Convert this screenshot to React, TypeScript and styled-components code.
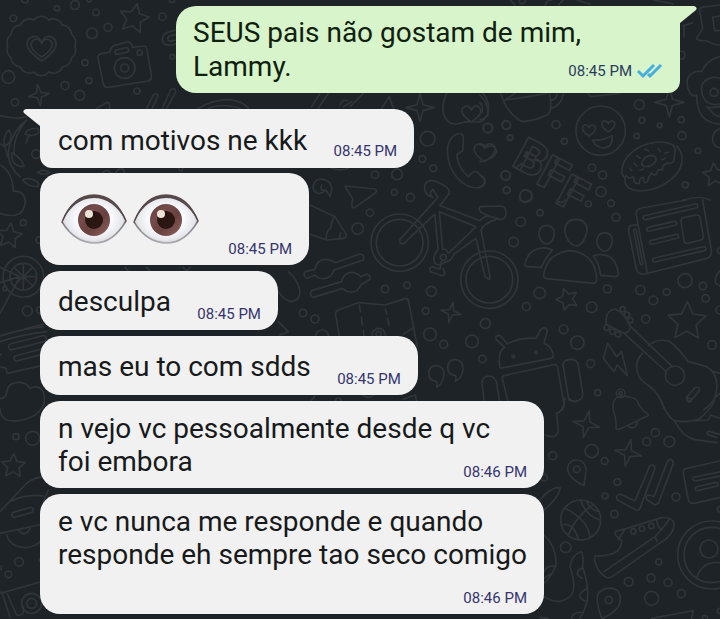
import React from "react";
import styled, { createGlobalStyle, css } from "styled-components";

const GlobalStyle = createGlobalStyle`
  *, *::before, *::after { box-sizing: border-box; }
  body {
    margin: 0;
    background: #1e2327;
    font-family: Roboto, "Liberation Sans", sans-serif;
  }
`;

const Chat = styled.main`
  position: relative;
  min-height: 100vh;
  overflow: hidden;
  background: #1e2327;
`;

const Wallpaper = styled.svg`
  position: absolute;
  inset: 0;
  width: 100%;
  height: 100%;
  fill: none;
  stroke: #303539;
  stroke-width: 5;
  stroke-linejoin: round;
  stroke-linecap: round;
`;

const WallpaperLetter = styled.text`
  font-family: Roboto, sans-serif;
  font-size: 140px;
  font-weight: 900;
`;

const Messages = styled.ol`
  position: relative;
  display: flex;
  flex-direction: column;
  align-items: flex-start;
  gap: 6px;
  margin: 0;
  padding: 6px 40px 4px;
  list-style: none;
`;

const Bubble = styled.li<{ $sent?: boolean; $first?: boolean }>`
  position: relative;
  display: grid;
  align-items: center;
  max-width: 504px;
  min-height: 59px;
  padding: 11px 17px 10px 18px;
  border-radius: 20px;
  background: #f1f1f1;
  color: #17191b;
  ${(p) =>
    p.$first &&
    css`
      margin-bottom: -1px;
      padding: 15px 17px 11px 18px;
      border-radius: 0 20px 20px 12px;
    `}
  ${(p) =>
    p.$sent &&
    css`
      align-self: flex-end;
      margin-bottom: 10px;
      padding: 10px 17px 9px;
      border-radius: 20px 0 12px 20px;
      background: #d7f4cb;
      color: #10200f;
    `}
`;

const Text = styled.p<{ $sent?: boolean }>`
  grid-area: 1 / 1;
  margin: 0;
  font-size: 28px;
  line-height: ${(p) => (p.$sent ? 34 : 33)}px;
`;

const MetaSpace = styled.span<{ $sent?: boolean }>`
  display: inline-block;
  width: ${(p) => (p.$sent ? 120 : 90)}px;
  height: 1px;
`;

const Meta = styled.span<{ $sent?: boolean }>`
  grid-area: 1 / 1;
  align-self: end;
  justify-self: end;
  display: flex;
  align-items: center;
  gap: 5px;
  margin-bottom: ${(p) => (p.$sent ? 3 : -4)}px;
  color: ${(p) => (p.$sent ? "#2b3b5e" : "#35346e")};
  font-size: 15px;
  line-height: 20px;
`;

const Tail = styled.svg<{ $sent?: boolean }>`
  position: absolute;
  top: 0;
  width: 18px;
  height: 18px;
  fill: ${(p) => (p.$sent ? "#d7f4cb" : "#f1f1f1")};
  ${(p) => (p.$sent ? "left: 100%; margin-left: -1px; transform: scaleX(-1);" : "right: 100%; margin-right: -1px;")}
`;

const Ticks = styled.svg`
  width: 26px;
  height: 16px;
  fill: none;
  stroke: #46aede;
  stroke-width: 3;
`;

const Eyes = styled.span`
  grid-area: 1 / 1;
  display: flex;
  gap: 6px;
  padding: 10px 93px 11px 3px;
`;

const EyeDrawing = styled.svg`
  display: block;
  width: 66px;
  height: 50px;
`;

type Circle = [number, number, number];

const star = (x: number, y: number, r: number, turn = 0, points = 5, depth = 0.48) => {
  const corners = Array.from({ length: points * 2 }, (_, i) => {
    const a = (turn * Math.PI) / 180 - Math.PI / 2 + (i * Math.PI) / points;
    const d = i % 2 ? r * depth : r;
    return `${(x + Math.cos(a) * d).toFixed(1)} ${(y + Math.sin(a) * d).toFixed(1)}`;
  });
  return `M${corners.join("L")}Z`;
};

const sparkle = (x: number, y: number, r: number, turn = 0) => star(x, y, r, turn, 4, 0.3);

const pill = (x1: number, y1: number, x2: number, y2: number, w = 6) => {
  const len = Math.hypot(x2 - x1, y2 - y1);
  const nx = (-(y2 - y1) / len) * w;
  const ny = ((x2 - x1) / len) * w;
  return `M${x1 + nx} ${y1 + ny}L${x2 + nx} ${y2 + ny}A${w} ${w} 0 0 0 ${x2 - nx} ${y2 - ny}L${x1 - nx} ${y1 - ny}A${w} ${w} 0 0 0 ${x1 + nx} ${y1 + ny}Z`;
};

const heart = (x: number, y: number, s: number) =>
  `M${x} ${y + s}C${x - s * 0.9} ${y + s * 0.4} ${x - s * 1.3} ${y - s * 0.1} ${x - s} ${y - s * 0.6}C${x - s * 0.7} ${y - s} ${x - s * 0.2} ${y - s * 0.9} ${x} ${y - s * 0.4}C${x + s * 0.2} ${y - s * 0.9} ${x + s * 0.7} ${y - s} ${x + s} ${y - s * 0.6}C${x + s * 1.3} ${y - s * 0.1} ${x + s * 0.9} ${y + s * 0.4} ${x} ${y + s}Z`;

const scallop = (x: number, y: number, rx: number, ry: number, n: number) => {
  const pts = Array.from({ length: n + 1 }, (_, i) => {
    const a = (i / n) * Math.PI * 2;
    return `${(x + Math.cos(a) * rx).toFixed(1)} ${(y + Math.sin(a) * ry).toFixed(1)}`;
  });
  return `M${pts[0]}` + pts.slice(1).map((p) => `A29 29 0 0 1 ${p}`).join("");
};

const doodles: { at: [number, number]; circles: Circle[]; paths: string[] }[] = [
  {
    // Badge, camera and wreath
    at: [0, 0],
    circles: [
      [40, 55, 10], [171, 25, 8], [225, 15, 13], [288, 37, 10], [276, 100, 16], [324, 82, 12],
      [487, 50, 11], [255, 188, 9], [267, 242, 9], [25, 231, 19], [195, 257, 12], [239, 286, 15],
      [45, 307, 11], [411, 273, 9], [419, 158, 8], [374, 204, 31], [374, 204, 12], [75, 0, 9],
      [516, 0, 8], [108, 462, 13], [517, 170, 7], [267, 0, 6],
    ],
    paths: [
      scallop(124, 138, 101, 80, 14),
      heart(125, 143, 40),
      heart(125, 142, 29),
      "M294 175Q292 163 304 161L330 156Q332 140 345 136L380 126Q392 124 398 142L428 138Q438 137 440 146L454 225Q456 240 444 243L325 262Q313 264 310 252Z",
      pill(352, 156, 379, 150, 7),
      star(402, 56, 46, 12),
      sparkle(117, 285, 32, -8),
      "M527 90L500 98Q483 108 488 125Q495 142 527 132M527 104L508 108Q496 118 510 124L527 120",
      "M440 325L460 285Q468 276 474 288L456 325M487 325L512 270Q524 260 528 275L500 325",
      "M290 325L322 307Q330 306 329 325M595 325Q640 298 690 299Q730 305 745 325M625 325Q670 308 720 325",
      "M0 347Q60 362 90 345M80 360Q30 400 25 460Q25 500 60 530M75 365Q38 412 42 462",
      "M75 402Q80 385 110 385Q118 388 115 400Q95 412 75 402ZM12 435Q10 405 26 390Q38 400 30 425Q20 440 12 435ZM36 458Q32 480 45 492Q60 504 72 498Q66 475 36 458Z",
      "M78 430Q84 408 90 405M68 540Q85 530 112 545Q122 555 110 560Q85 560 68 540ZM112 517Q130 505 150 518Q130 528 112 517Z",
      "M0 432Q20 436 22 470M0 494Q38 515 40 574Q72 570 76 605Q74 640 45 646Q20 648 0 640",
      "M305 523Q320 500 335 523M345 523Q355 500 370 508L375 523M535 503Q542 522 550 503",
    ],
  },
  {
    // Cocktail slice on the left edge
    at: [0, 480],
    circles: [[70, 188, 9], [118, 240, 10], [82, 453, 15], [120, 450, 10], [15, 386, 6], [70, 350, 40], [70, 350, 61]],
    paths: [
      star(28, 228, 39, 8),
      "M0 322L60 350L0 460M0 368L60 350M70 350L70 312M70 350L98 322M70 350L108 350M70 350L98 378M70 350L70 388M70 350L42 378M70 350L42 322",
      "M0 528Q60 508 130 500M0 545Q60 525 140 515M375 322L385 334M440 322L450 334M550 322Q560 340 570 322",
    ],
  },
  {
    // Train, cloud and car
    at: [0, 960],
    circles: [[48, 350, 9], [98, 355, 21], [57, 725, 13], [25, 763, 10], [0, 743, 5], [95, 850, 30], [95, 850, 15], [122, 720, 5]],
    paths: [
      "M0 48L130 12M0 140L18 145L22 160L125 137M0 105L4 102",
      pill(35, 80, 130, 56, 9),
      pill(50, 115, 130, 94, 8),
      "M0 235Q20 235 20 215Q25 185 60 187Q85 190 88 205Q125 190 132 225Q140 260 105 285Q60 310 20 300Q0 290 0 265",
      star(40, 438, 37, 2),
      "M0 575L70 500Q90 475 130 470M30 545Q80 520 130 528M130 545L145 510M0 640L130 612M20 645Q30 680 75 683Q110 680 125 660M55 630Q75 655 92 622",
      pill(44, 584, 92, 570, 8),
      "M0 820L125 785M5 815L30 890M22 822L50 885Q75 890 70 860",
    ],
  },
  {
    // Smiley, donut and cup
    at: [1440, 0],
    circles: [
      [478, 314, 15], [486, 361, 9], [539, 376, 7], [604, 359, 9], [606, 407, 12], [470, 408, 8],
      [654, 452, 8], [23, 384, 14], [79, 375, 13], [90, 413, 8], [228, 374, 12], [253, 424, 9],
      [336, 503, 11], [368, 525, 12], [77, 526, 14], [80, 571, 10], [137, 588, 18], [363, 575, 15],
      [616, 555, 9], [603, 165, 12], [127, 2, 9], [362, 392, 74], [702, 277, 12],
    ],
    paths: [
      heart(327, 390, 18),
      heart(385, 378, 18),
      "M338 420Q370 422 396 407Q400 440 372 444Q345 442 338 420Z",
      sparkle(568, 307, 44),
      "M62 280Q80 340 125 364Q160 365 200 345Q220 335 208 280M215 325Q245 315 250 280M212 300Q228 302 232 280M75 300Q150 290 200 280M78 298L105 280",
      "M0 285Q25 310 24 345Q10 360 0 358M0 308Q12 320 5 338M0 435Q10 430 20 442Q45 430 50 455Q40 480 0 485M0 525Q15 535 15 550Q10 560 0 562M325 280L330 290L420 280",
      "M425 520Q425 470 480 440Q540 415 580 435Q590 450 582 472Q586 492 560 490Q545 495 548 510Q532 505 530 520Q524 532 514 518Q505 530 502 545Q492 555 490 532Q480 530 478 550Q462 555 460 530Q445 538 440 528Q430 535 425 520Z",
      "M590 438Q620 470 595 515Q550 570 480 573Q430 570 435 533",
      "M485 490Q490 468 515 466Q532 468 528 482Q515 500 495 500Q485 498 485 490Z",
      "M470 468L480 474M495 448L505 452M535 445L540 455M555 460L565 456M545 480L555 475M462 490L470 498M480 510L490 508M450 505L455 512",
      "M720 170Q680 180 665 215Q640 210 625 230Q615 255 630 280Q640 292 650 285Q650 350 690 365Q700 372 720 372M720 235Q690 225 668 250Q658 275 675 300Q690 318 720 312M720 320Q690 325 680 320L705 345L720 350M720 385Q690 400 700 430Q710 445 720 442",
      "M720 15L665 22Q655 25 660 40L668 85L650 115Q655 124 680 122Q700 135 720 135M720 48L698 52L704 92L720 92M608 78L638 68M612 75L612 110",
      star(704, 525, 37, -6),
      "M610 600Q660 585 690 600M195 15Q200 0 215 0M235 15L250 0M90 0L105 15M520 0L580 12M290 0L330 12",
    ],
  },
  {
    // Phone and bicycle
    at: [900, 240],
    circles: [
      [383, 176, 22], [564, 144, 14], [619, 135, 12], [630, 173, 8], [367, 237, 10], [400, 265, 10],
      [225, 284, 11], [291, 283, 16], [283, 337, 9], [331, 352, 12], [210, 398, 11], [173, 446, 17],
      [617, 287, 14], [620, 330, 10], [678, 348, 19], [299, 488, 86], [299, 488, 70],
      [568, 599, 86], [568, 599, 70], [430, 532, 9],
    ],
    paths: [
      sparkle(360, 83, 42),
      "M440 40Q425 70 430 100Q440 135 470 132Q500 122 540 126Q570 110 565 75Q560 50 548 40",
      heart(514, 100, 26),
      "M470 162Q450 170 443 200Q438 270 490 310Q520 330 545 320Q560 305 553 295L530 275Q520 272 505 290Q475 265 470 225L488 212Q492 175 488 165Q480 158 470 162Z",
      heart(554, 216, 29),
      "M135 318L225 327Q235 332 222 342L165 382Q155 388 156 372L158 355Q140 330 135 318Z",
      "M40 318Q42 298 65 297Q92 300 96 328L90 350L78 330Q60 348 45 335Q38 328 40 318ZM65 315Q58 335 78 330",
      "M30 375L105 410L137 460Q142 472 130 475L80 480L30 462M105 410Q95 420 92 445Q80 450 78 475M122 458L118 475",
      "M312 490Q296 496 300 478L414 352L398 328Q384 340 398 352Q370 345 374 315Q382 298 405 303L430 315Q450 325 448 340L422 374M312 490L403 403",
      "M418 376L540 422Q558 404 568 410M418 395L528 440L445 520Q440 505 428 508Z",
      "M405 405L414 508Q395 530 405 550Q420 560 430 548Q455 545 462 522L528 475L555 590Q570 605 570 590L543 450Q550 430 590 418",
      "M540 380L605 378Q618 380 618 400Q618 420 600 418Q570 410 545 398Q533 388 540 380Z",
      "M424 545L420 567L395 560Q385 565 392 575L425 587Q438 588 432 575L430 565",
      "M35 80L60 40M55 85L85 40M130 80L155 65M150 80L190 40M120 75Q128 55 143 62M245 85L268 50L280 84",
      "M95 265Q120 275 145 265",
    ],
  },
  {
    // Sliders, map and quotation marks
    at: [900, 690],
    circles: [
      [255, 177, 11], [321, 166, 10], [394, 184, 15], [377, 243, 10], [390, 313, 19], [431, 343, 12],
      [516, 334, 19], [9, 249, 11], [45, 267, 12], [66, 320, 20], [236, 315, 20], [236, 312, 8],
      [115, 512, 8],
    ],
    paths: [
      "M22 145Q8 140 15 125L45 118Q50 90 75 88Q95 90 105 98L180 72Q195 75 190 90L102 120Q95 145 70 146Q50 145 45 135Z",
      "M40 202Q25 195 35 182L125 155Q130 128 155 127Q175 130 182 140L200 132Q215 138 210 148L182 165Q175 185 155 187Q135 185 128 175Z",
      sparkle(453, 247, 31, 12),
      "M118 320L107 255Q105 245 115 240L175 218L255 225L318 205Q325 205 326 215L352 350M310 312L342 292M346 495L350 515M310 508L345 495M178 225L181 245M184 262L187 285M190 300L192 318M256 238L260 252M263 265L267 285",
      "M410 455Q385 452 386 430Q388 406 410 407Q432 410 432 435Q430 460 410 472Q412 462 410 455Z",
      "M467 437Q442 434 443 412Q445 388 467 389Q489 392 489 417Q487 442 467 454Q469 444 467 437Z",
      "M-65 185Q-50 210 -25 215Q0 210 0 185Q-5 150 -35 125M-65 275L-35 305L-60 315M35 510L45 498M190 497Q205 508 220 497",
    ],
  },
  {
    // People, newspaper, robot and guitar
    at: [1440, 600],
    circles: [
      [180, 38, 9], [122, 65, 14], [101, 126, 14], [325, 12, 9], [393, 10, 10], [408, 52, 12],
      [179, 279, 17], [139, 320, 12], [335, 322, 16], [382, 267, 12], [16, 371, 15], [251, 388, 13],
      [292, 428, 20], [332, 491, 12], [353, 578, 9], [481, 270, 14], [520, 301, 13], [560, 276, 10],
      [615, 242, 21], [669, 258, 11], [677, 295, 11], [497, 357, 12], [696, 435, 13], [720, 330, 12],
      [7, 477, 11], [422, 580, 13], [422, 580, 5], [585, 527, 29], [428, 328, 8], [441, 344, 8],
      [451, 361, 8], [380, 383, 8], [397, 395, 8], [414, 403, 8], [100, 469, 4], [168, 457, 4],
      [720, 152, 8],
    ],
    paths: [
      "M287 58Q322 60 321 92Q312 138 287 138Q260 130 254 92Q255 60 287 58Z",
      "M200 76Q224 78 223 102Q218 130 200 132Q180 128 176 102Q178 78 200 76Z",
      "M374 98Q398 100 397 124Q392 152 374 154Q354 150 350 124Q352 100 374 98Z",
      "M191 225Q200 160 270 152Q345 160 350 235Q350 250 340 250L200 236Q190 234 191 225Z",
      "M135 190Q145 145 195 143L218 150Q195 175 184 202L140 200Q133 198 135 190Z",
      "M340 168Q360 160 385 168Q410 180 415 220Q416 230 405 230L362 226Q358 190 340 168Z",
      star(262, 298, 34, -20),
      "M668 0L694 150Q696 170 680 175L495 222Q475 225 470 210L446 95Q444 80 455 76L474 74L468 40Q468 28 485 24L620 0M474 74L502 218",
      pill(465, 92, 484, 190, 4),
      pill(495, 53, 647, 18),
      pill(506, 88, 584, 70),
      pill(515, 127, 590, 109),
      pill(524, 180, 672, 146),
      "M612 52L650 45Q658 44 660 52L670 110Q671 118 662 120L622 130Q614 131 612 122L603 65Q602 55 612 52Z",
      star(621, 365, 60, 1),
      "M720 212Q700 235 708 250L720 258M230 0Q242 15 256 0M120 0Q135 10 150 0",
      "M60 503Q52 455 74 442L50 420Q42 405 60 406L82 432Q120 412 168 415L182 390Q195 375 202 392L192 430Q215 440 220 465Q222 472 212 475L66 504Z",
      "M85 610L67 535Q66 527 76 526L222 494Q230 492 232 500L252 610Q253 625 245 630",
      "M250 500Q245 480 270 478Q290 478 294 492L308 580Q310 600 288 604Q270 604 265 592Z",
      "M12 600L6 550Q6 528 28 528Q46 530 50 550L58 600",
      "M383 430L410 470L425 455L442 527L412 495L402 515L370 475Z",
      "M378 360Q380 330 405 327Q430 335 452 380Q445 400 432 400Q400 385 378 372Z",
      "M452 380L577 500M432 400L560 516M487 460Q460 490 475 525Q480 540 510 560Q535 575 555 630M505 438Q530 412 570 425Q600 450 625 485L680 500Q715 520 710 570Q705 610 670 630M700 515L720 520M708 590L720 580",
      pill(628, 595, 650, 569, 8),
    ],
  },
  {
    // Bell, basketball, shoe and contact
    at: [1620, 1200],
    circles: [
      [155, 153, 20], [38, 167, 12], [194, 183, 10], [320, 125, 12], [346, 98, 12], [388, 125, 16],
      [232, 246, 10], [195, 288, 9], [408, 291, 12], [223, 342, 11], [110, 208, 10], [77, 442, 16],
      [266, 545, 13], [333, 534, 12], [384, 548, 12], [356, 486, 9], [424, 581, 12], [335, 595, 21],
      [12, 233, 10], [122, 360, 60], [206, 600, 11], [280, 394, 8], [306, 386, 8], [334, 378, 8],
      [515, 465, 102], [515, 465, 83], [507, 447, 27], [448, 0, 6], [540, 328, 8], [495, 655, 8], [540, 633, 8],
    ],
    paths: [
      "M220 30Q215 -10 245 -12Q280 -10 290 0Q300 25 318 38Q330 44 322 48L245 85Q232 92 228 85Q230 60 220 30M265 78Q272 88 285 80Q295 72 290 62",
      sparkle(139, 73, 41, 12),
      sparkle(264, 159, 41, 12),
      "M132 257Q85 235 82 205Q88 178 112 180Q140 185 138 215Z",
      "M185 655Q165 600 175 580Q200 555 230 570Q250 590 235 620Q215 645 185 655Z",
      "M75 325Q145 360 150 412M122 300Q135 345 180 360M160 315Q110 345 85 405M64 375Q100 365 115 418M140 303Q150 330 178 335",
      "M240 282Q225 285 232 300L288 330Q298 332 300 325L345 205Q345 195 335 195Q328 195 326 205L285 302Z",
      "M335 287L322 285Q315 292 322 300L345 315L355 310L400 190Q400 178 388 178L382 185L342 290Z",
      "M165 470Q160 480 175 510Q190 530 205 534Q215 532 230 520L380 415Q405 390 402 370Q395 350 365 353L260 385L225 395Q222 405 245 422Q245 445 225 458Q200 468 165 468M192 515L345 410Q365 390 390 355M235 418L255 388M345 410L352 425M350 362Q352 380 365 390",
      "M540 183L440 205Q428 208 430 220L445 300Q450 312 462 310L540 293",
      pill(465, 237, 550, 220),
      pill(472, 266, 528, 253),
      "M470 535Q485 482 540 488M362 0Q375 40 405 65Q430 110 460 118L530 128M405 62Q450 70 480 55Q510 30 525 0M465 62L505 60L512 45L540 55M530 112L505 105Q495 95 508 94L540 103",
      "M15 105Q50 120 55 90L50 40Q70 35 75 -5M0 300Q30 262 60 262Q60 290 12 330M12 405Q50 440 48 495Q35 530 12 550M12 515Q20 495 46 498M12 535L32 522",
      "M12 590Q60 620 95 585Q110 560 90 500Q95 465 122 455Q132 460 128 500Q150 570 140 610Q130 640 120 655M125 505Q98 520 127 535M138 567Q100 590 140 605M95 655Q100 632 130 638M335 655L460 632L455 655M0 652L25 655M85 0L105 5L118 0",
    ],
  },
];

function Doodles() {
  return (
    <Wallpaper viewBox="0 0 2160 1857" preserveAspectRatio="xMinYMin slice" aria-hidden="true">
      {doodles.map(({ at, circles, paths }) => (
        <g key={at.join()} transform={`translate(${at[0]} ${at[1]})`}>
          {circles.map(([x, y, r]) => (
            <circle key={`${x},${y},${r}`} cx={x} cy={y} r={r} />
          ))}
          {paths.map((d) => (
            <path key={d} d={d} />
          ))}
        </g>
      ))}
      <WallpaperLetter transform="translate(1532 496) rotate(28)">B</WallpaperLetter>
      <WallpaperLetter transform="translate(1604 548) rotate(28)">F</WallpaperLetter>
      <WallpaperLetter transform="translate(1662 606) rotate(28)">F</WallpaperLetter>
    </Wallpaper>
  );
}

function Eye({ id }: { id: string }) {
  return (
    <EyeDrawing viewBox="0 0 66 50" role="img" aria-label="eye">
      <defs>
        <radialGradient id={`${id}-white`} cx="0.5" cy="0.5" r="0.55">
          <stop offset="0.5" stopColor="#fbfbff" />
          <stop offset="0.8" stopColor="#e6e7ea" />
          <stop offset="1" stopColor="#bdbdbf" />
        </radialGradient>
        <linearGradient id={`${id}-rim`} x1="0" y1="0" x2="0" y2="1">
          <stop offset="0" stopColor="#5f4c4c" />
          <stop offset="0.5" stopColor="#4b3b3d" />
          <stop offset="0.62" stopColor="#85858a" />
          <stop offset="1" stopColor="#aaa9ae" />
        </linearGradient>
        <linearGradient id={`${id}-iris`} x1="0" y1="0" x2="1" y2="1">
          <stop offset="0" stopColor="#5e3d3d" />
          <stop offset="0.3" stopColor="#744b4a" />
          <stop offset="0.6" stopColor="#68413f" />
          <stop offset="1" stopColor="#94645f" />
        </linearGradient>
      </defs>
      <path
        d="M1 28Q12 1 33 1Q54 1 65 27Q52 49 34 49Q14 49 1 28Z"
        fill={`url(#${id}-white)`}
        stroke={`url(#${id}-rim)`}
        strokeWidth="1.5"
        strokeLinejoin="round"
      />
      <path d="M1 28Q12 1 33 1Q54 1 65 27Q52 4 33 4Q13 4 1 28Z" fill="#54484a" />
      <circle cx="33" cy="26" r="16" fill={`url(#${id}-iris)`} />
      <circle cx="33" cy="26" r="9" fill="#2a1713" />
      <circle cx="28" cy="20" r="4" fill="#eee3d6" />
    </EyeDrawing>
  );
}

function BubbleTail({ sent }: { sent?: boolean }) {
  return (
    <Tail $sent={sent} viewBox="0 0 18 18" aria-hidden="true">
      <path d="M18 0H3Q-1 1 1 4L17 17L18 18Z" />
    </Tail>
  );
}

type MessageData = { text?: string; time: string; sent?: boolean; first?: boolean };

const messages: MessageData[] = [
  { text: "SEUS pais não gostam de mim, Lammy.", time: "08:45 PM", sent: true },
  { text: "com motivos ne kkk", time: "08:45 PM", first: true },
  { time: "08:45 PM" },
  { text: "desculpa", time: "08:45 PM" },
  { text: "mas eu to com sdds", time: "08:45 PM" },
  { text: "n vejo vc pessoalmente desde q vc foi embora", time: "08:46 PM" },
  { text: "e vc nunca me responde e quando responde eh sempre tao seco comigo", time: "08:46 PM" },
];

function Message({ text, time, sent, first }: MessageData) {
  return (
    <Bubble $sent={sent} $first={first}>
      {(sent || first) && <BubbleTail sent={sent} />}
      {text ? (
        <Text $sent={sent}>
          {text}
          <MetaSpace $sent={sent} />
        </Text>
      ) : (
        <Eyes>
          <Eye id="left-eye" />
          <Eye id="right-eye" />
        </Eyes>
      )}
      <Meta $sent={sent}>
        <time>{time}</time>
        {sent && (
          <Ticks viewBox="0 0 26 16" role="img" aria-label="Read">
            <path d="M1 8L6 13L17 2M11 11L13 13L24 2" />
          </Ticks>
        )}
      </Meta>
    </Bubble>
  );
}

export default function App() {
  return (
    <>
      <GlobalStyle />
      <Chat>
        <Doodles />
        <Messages>
          {messages.map((message, index) => (
            <Message key={index} {...message} />
          ))}
        </Messages>
      </Chat>
    </>
  );
}
